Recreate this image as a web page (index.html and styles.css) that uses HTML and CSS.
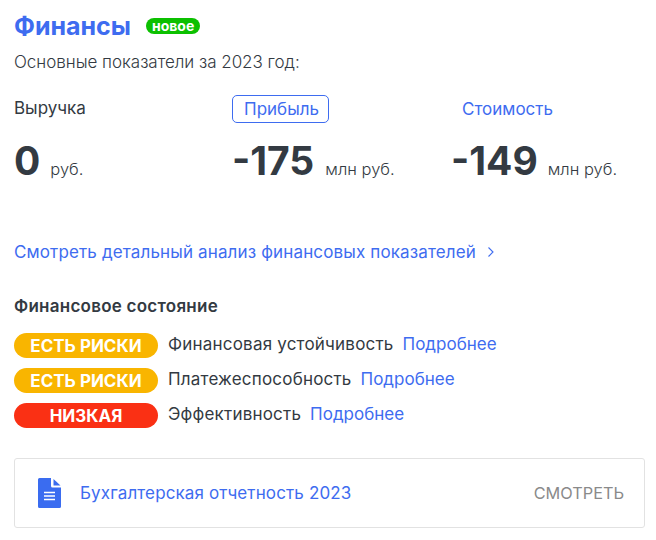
FILE: index.html
```html
<!DOCTYPE html>
<html lang="ru">
<head>
<meta charset="utf-8">
<title>Финансы</title>
<link rel="stylesheet" href="styles.css">
</head>
<body>
<main class="page">
  <header class="head">
    <h1 class="title">Финансы</h1>
    <span class="new">новое</span>
  </header>
  <p class="sub">Основные показатели за 2023 год:</p>
  <section class="metrics">
    <div class="metric m1">
      <div class="label-row"><span class="label">Выручка</span></div>
      <div class="value"><b>0</b><span class="unit">руб.</span></div>
    </div>
    <div class="metric m2">
      <div class="label-row"><a class="tab active">Прибыль</a></div>
      <div class="value"><b>-175</b><span class="unit">млн руб.</span></div>
    </div>
    <div class="metric m3">
      <div class="label-row"><a class="tab">Стоимость</a></div>
      <div class="value"><b>-149</b><span class="unit">млн руб.</span></div>
    </div>
  </section>
  <a class="detail">Смотреть детальный анализ финансовых показателей
    <svg class="chev" width="8" height="12" viewBox="0 0 8 12"><path d="M1.5 1.5 6 6l-4.500 4.500" fill="none" stroke="#3e6cf0" stroke-width="1.100"/></svg>
  </a>
  <h2 class="state">Финансовое состояние</h2>
  <ul class="rows">
    <li class="row"><span class="pill warn">ЕСТЬ РИСКИ</span><span class="row-name">Финансовая устойчивость</span><a class="more">Подробнее</a></li>
    <li class="row"><span class="pill warn">ЕСТЬ РИСКИ</span><span class="row-name">Платежеспособность</span><a class="more">Подробнее</a></li>
    <li class="row"><span class="pill bad">НИЗКАЯ</span><span class="row-name">Эффективность</span><a class="more">Подробнее</a></li>
  </ul>
  <section class="report">
    <svg class="doc" width="23" height="30" viewBox="0 0 23 30"><path d="M1.500 0H13v8a1.500 1.500 0 0 0 1.500 1.500H23v19a1.500 1.500 0 0 1-1.500 1.500h-20A1.500 1.500 0 0 1 0 28.500v-27A1.500 1.500 0 0 1 1.500 0z" fill="#3a6cf0"/><path d="M15.500 1 22.500 7.500h-7z" fill="#3a6cf0"/><path d="M6 14.500h11M6 18h11M6 21.500h11" stroke="#fff" stroke-width="1.500"/></svg>
    <a class="report-name">Бухгалтерская отчетность 2023</a>
    <span class="see">СМОТРЕТЬ</span>
  </section>
</main>
</body>
</html>
```
FILE: styles.css
```css
* { box-sizing: border-box; }
html, body { margin: 0; background: #fff; }
body { font-family: Inter, "Noto Sans", sans-serif; color: #333a42; font-size: 17px; }
.page { padding: 11px 11px 0 14px; }
a { color: #3e6cf0; }
.head { display: flex; align-items: center; height: 30px; }
.title { margin: 0; font-size: 25px; line-height: 30px; font-weight: 700; color: #3e6cf0; }
.new { margin-left: 15px; background: #0cc000; color: #fff; font-size: 14px; font-weight: 700; line-height: 16px; padding: 0 6px; border-radius: 8px; }
.sub { margin: 11px 0 0; font-size: 17px; line-height: 20px; font-weight: 300; letter-spacing: -0.030px; }
.metrics { display: flex; margin-top: 23px; }
.metric { flex: none; }
.m1 { width: 218px; }
.m2 { width: 219px; }
.label-row { height: 28px; display: flex; align-items: center; }
.label { margin-top: -2px; }
.tab { line-height: 26px; padding: 0 9px 0 11px; border: 1px solid transparent; border-radius: 5px; }
.m3 .tab { padding-left: 10px; }
.m2 .unit { margin-left: 11px; }
.active { border-color: #3e6cf0; }
.value { display: flex; align-items: baseline; margin-top: 14px; line-height: 48px; }
.value b { font-size: 39px; font-weight: 700; }
.unit { margin-left: 10px; font-size: 16.500px; font-weight: 300; }
.detail { display: flex; align-items: center; gap: 11px; margin-top: 49px; line-height: 20px; letter-spacing: 0.140px; }
.state { margin: 34px 0 0; font-size: 17px; font-weight: 600; line-height: 20px; letter-spacing: 0.250px; }
.rows { list-style: none; margin: 17px 0 0; padding: 0; display: flex; flex-direction: column; gap: 10px; }
.row { display: flex; align-items: center; height: 25px; }
.row-name, .more { margin-top: -3px; }
.row-name { letter-spacing: 0.200px; }
.more { margin-left: 9px; }
.pill { width: 144px; height: 25px; margin-right: 10px; border-radius: 13px; color: #fff; font-weight: 700; font-size: 17px; display: flex; align-items: center; justify-content: center; }
.warn { background: #f9b500; }
.bad { background: #fa3014; }
.report { display: flex; align-items: center; height: 70px; margin-top: 30px; border: 1px solid #e2e2e2; border-radius: 3px; padding: 0 20px 0 23px; }
.doc { flex: none; }
.report-name { margin-left: 19px; letter-spacing: 0.130px; }
.see { margin-left: auto; color: #8a8a8a; font-weight: 400; font-size: 16.300px; }
```
